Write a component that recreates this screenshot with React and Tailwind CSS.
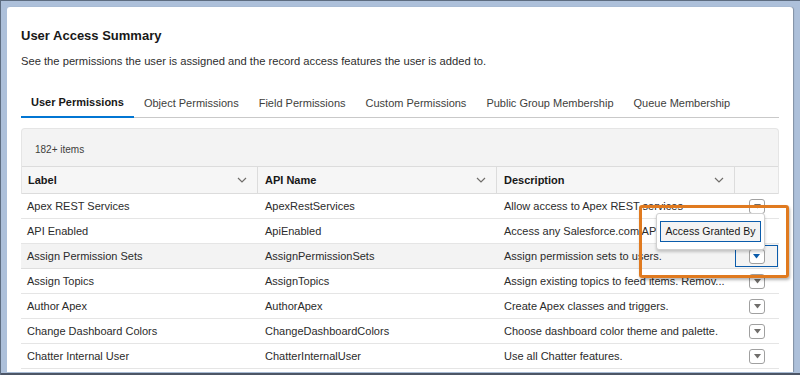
import React from "react";

const rows = [
  ["Apex REST Services", "ApexRestServices", "Allow access to Apex REST services"],
  ["API Enabled", "ApiEnabled", "Access any Salesforce.com API."],
  ["Assign Permission Sets", "AssignPermissionSets", "Assign permission sets to users."],
  ["Assign Topics", "AssignTopics", "Assign existing topics to feed items. Remov..."],
  ["Author Apex", "AuthorApex", "Create Apex classes and triggers."],
  ["Change Dashboard Colors", "ChangeDashboardColors", "Choose dashboard color theme and palette."],
  ["Chatter Internal User", "ChatterInternalUser", "Use all Chatter features."],
];

const tabs = [
  "User Permissions",
  "Object Permissions",
  "Field Permissions",
  "Custom Permissions",
  "Public Group Membership",
  "Queue Membership",
];

function Chevron() {
  return (
    <svg width="12" height="12" viewBox="0 0 12 12" className="shrink-0">
      <path d="M2 4 L6 8 L10 4" fill="none" stroke="#706e6b" strokeWidth="1.2" />
    </svg>
  );
}

function MenuButton({ active }) {
  return (
    <div className="w-[16px] h-[15px] rounded-[3px] border border-[#a0a0a0] bg-white flex items-center justify-center">
      <svg width="7" height="5" viewBox="0 0 7 5">
        <path d="M0 0 L7 0 L3.5 4.5 Z" fill={active ? "#0b5cab" : "#706e6b"} />
      </svg>
    </div>
  );
}

export default function App() {
  return (
    <div
      className="w-[800px] h-[375px] bg-[#adc0da] border-t border-l border-[#5d6c80] overflow-hidden relative"
      style={{ fontFamily: "'Liberation Sans', Arial, sans-serif" }}
    >
      <div className="ml-[6px] mt-[6px] w-[786px] h-[365px] bg-white rounded-t-[3px] shadow-[1px_0_1px_rgba(0,0,0,0.25)] px-[14px] pt-[19px] text-[#181818]">
        <div className="text-[13px] font-bold leading-[20px]">User Access Summary</div>
        <div className="mt-[7px] text-[11.2px] leading-[16px] text-[#2e2e2e]">
          See the permissions the user is assigned and the record access features the user is added to.
        </div>
        <div className="mt-[20px] flex border-b border-[#c9c9c9] h-[29px] items-stretch whitespace-nowrap">
          {tabs.map((t, i) => (
            <div
              key={t}
              className={
                i === 0
                  ? "px-[10px] flex items-center text-[11px] font-bold text-[#181818] border-b-2 border-[#0176d3] -mb-px"
                  : "px-[10px] flex items-center text-[11px] text-[#3e3e3c]"
              }
            >
              {t}
            </div>
          ))}
        </div>
        <div className="mt-[10px] rounded-t-[4px] bg-[#f3f3f3] border border-[#e5e5e5] border-b-0">
          <div className="h-[37px] flex items-center pl-[13px] pt-[3px] text-[10px] text-[#3e3e3c]">182+ items</div>
          <div className="flex h-[28px] bg-[#f6f6f6] border-t border-b border-[#dcdcdc] text-[11px] font-bold text-[#181818]">
            <div className="w-[236px] flex items-center justify-between pl-[6px] pr-[9px] border-r border-[#dcdcdc]">
              <span>Label</span>
              <Chevron />
            </div>
            <div className="w-[239px] flex items-center justify-between pl-[7px] pr-[9px] border-r border-[#dcdcdc]">
              <span>API Name</span>
              <Chevron />
            </div>
            <div className="w-[238px] flex items-center justify-between pl-[7px] pr-[9px] border-r border-[#dcdcdc]">
              <span>Description</span>
              <Chevron />
            </div>
            <div className="flex-1" />
          </div>
        </div>
        <div className="text-[11px] text-[#2b2b2b]">
          {rows.map((r, i) => (
            <div
              key={r[0]}
              className={
                i === 2
                  ? "flex h-[25px] bg-[#f3f3f3] border-b border-[#dedede]"
                  : "flex h-[25px] bg-white border-b border-[#e5e5e5]"
              }
            >
              <div className="w-[236px] pl-[6px] flex items-center">{r[0]}</div>
              <div className="w-[239px] pl-[8px] flex items-center">{r[1]}</div>
              <div className="w-[239px] pl-[8px] flex items-center whitespace-nowrap overflow-hidden">{r[2]}</div>
              <div
                className={
                  i === 2
                    ? "flex-1 flex items-center justify-center border border-[#0b5cab] mr-[1px] my-[1px]"
                    : "flex-1 flex items-center justify-center"
                }
              >
                <MenuButton active={i === 2} />
              </div>
            </div>
          ))}
        </div>
      </div>
      <div className="absolute left-0 right-0 bottom-0 h-[2px] bg-[#4d5666]" />

      {/* dropdown menu */}
      <div className="absolute left-[655px] top-[212px] w-[109px] h-[37px] bg-white border border-[#d0d0d0] rounded-[3px] shadow-[0_2px_3px_rgba(0,0,0,0.2)] p-[2px] flex">
        <div className="flex-1 border border-[#0b5cab] bg-[#f3f3f3] flex items-center justify-center text-[10.5px] text-[#181818] my-[5px] mx-[1px] whitespace-nowrap">
          Access Granted By
        </div>
      </div>

      {/* orange highlight */}
      <div className="absolute left-[638px] top-[204px] w-[150px] h-[73px] border-[3px] border-[#e07a1f] rounded-[3px] shadow-[1px_2px_3px_rgba(0,0,0,0.3)]" />
    </div>
  );
}
